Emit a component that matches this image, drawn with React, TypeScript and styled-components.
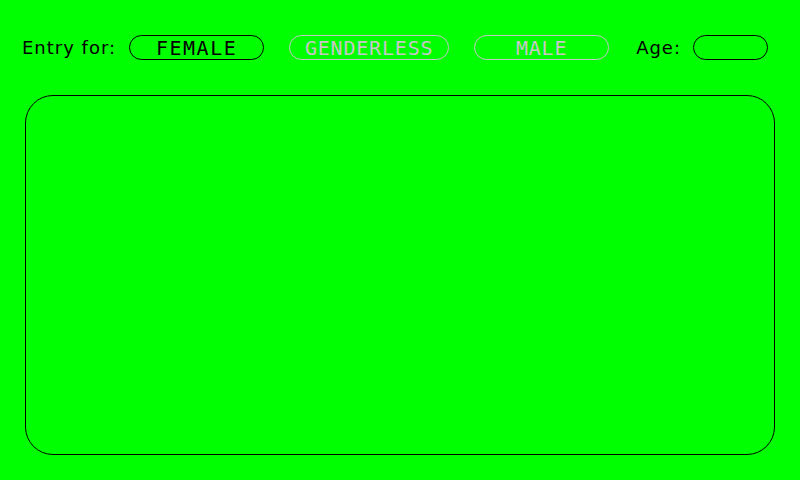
import React from "react";
import styled, { createGlobalStyle } from "styled-components";

const Global = createGlobalStyle`
  html, body { margin: 0; padding: 0; background: #00ff00; }
  body { width: 800px; height: 480px; overflow: hidden; font-family: "DejaVu Sans", sans-serif; }
`;

const Page = styled.div`
  width: 800px;
  height: 480px;
  box-sizing: border-box;
  padding: 35px 0 0 0;
  display: flex;
  flex-direction: column;
`;

const Toolbar = styled.div`
  display: flex;
  align-items: center;
  height: 25px;
  padding-left: 22px;
`;

const Label = styled.span<{ $gap: number }>`
  font-size: 18px;
  color: #000;
  margin-right: ${(p) => p.$gap}px;
  white-space: nowrap;
  letter-spacing: 1px;
`;

const Pill = styled.div<{ $w: number; $active?: boolean; $gap?: number }>`
  box-sizing: border-box;
  width: ${(p) => p.$w}px;
  height: 25px;
  border: 1px solid ${(p) => (p.$active ? "#000" : "#c8c8c8")};
  color: ${(p) => (p.$active ? "#000" : "#c8c8c8")};
  border-radius: 13px;
  display: flex;
  align-items: center;
  justify-content: center;
  font-family: "DejaVu Sans Mono", monospace;
  font-size: 20px;
  letter-spacing: ${(p) => (p.$active ? 1.5 : 0.8)}px;
  margin-right: ${(p) => p.$gap ?? 0}px;
`;

const Panel = styled.div`
  box-sizing: border-box;
  margin: 35px 0 0 25px;
  width: 750px;
  height: 360px;
  border: 1px solid #000;
  border-radius: 28px;
`;

export default function App() {
  return (
    <>
      <Global />
      <Page>
        <Toolbar>
          <Label $gap={13}>Entry for:</Label>
          <Pill $w={135} $active $gap={25}>FEMALE</Pill>
          <Pill $w={160} $gap={25}>GENDERLESS</Pill>
          <Pill $w={135} $gap={27}>MALE</Pill>
          <Label $gap={12}>Age:</Label>
          <Pill $w={75} $active />
        </Toolbar>
        <Panel />
      </Page>
    </>
  );
}
